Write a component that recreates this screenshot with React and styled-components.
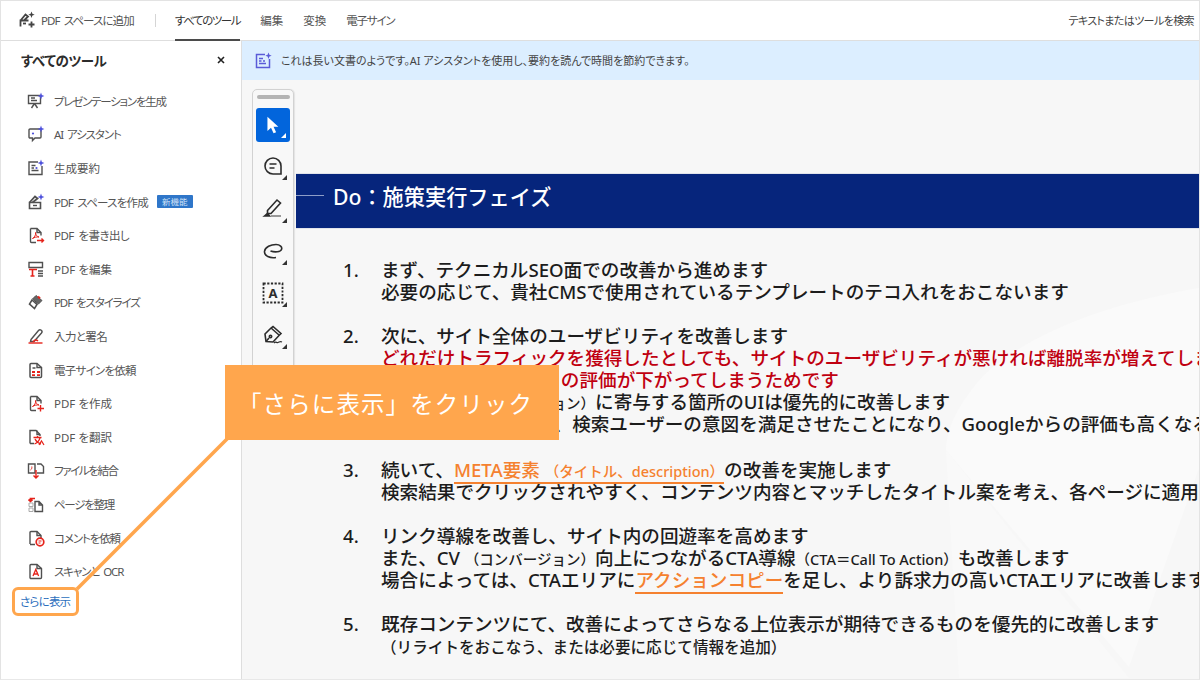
import React from "react";
import styled, { createGlobalStyle, css } from "styled-components";

const GRAY = "#505050";
const RED = "#e5231b";
const PURPLE = "#4f52dc";

const GlobalStyle = createGlobalStyle`
  html, body { margin: 0; padding: 0; background: #fff; }
  body {
    font-family: "Noto Sans", "Noto Sans CJK JP", sans-serif;
    font-feature-settings: "palt";
  }
  * { box-sizing: border-box; }
`;

const Shell = styled.div`
  position: relative;
  width: 1200px;
  height: 680px;
  border: 1px solid #e3e3e3;
  border-bottom-color: #e8e8e8;
  display: flex;
  flex-direction: column;
  overflow: hidden;
`;

const TopBar = styled.header`
  height: 40px;
  flex-shrink: 0;
  display: flex;
  align-items: stretch;
  padding: 0 5px 0 17px;
  border-bottom: 1px solid #dedede;
  background: #fff;
`;

const AddSpace = styled.div`
  display: flex;
  align-items: center;
  gap: 5px;
  padding-bottom: 2px;
  font-size: 11.5px;
  letter-spacing: -0.9px;
  word-spacing: 2px;
  color: #555;
`;

const Divider = styled.span`
  width: 1px;
  height: 13px;
  background: #d5d5d5;
  align-self: center;
  margin: 0 19px 0 21px;
`;

const Tabs = styled.nav`
  display: flex;
  gap: 20px;
`;

const Tab = styled.div`
  display: flex;
  align-items: center;
  padding-bottom: 2px;
  font-size: 11.5px;
  letter-spacing: ${(p) => p.$track || 0}px;
  color: ${(p) => (p.$active ? "#333" : "#555")};
  border-bottom: 2px solid ${(p) => (p.$active ? "#4b4b4b" : "transparent")};
  border-top: 2px solid transparent;
  margin-bottom: -1px;
`;

const Search = styled.div`
  margin-left: auto;
  padding-bottom: 2px;
  display: flex;
  align-items: center;
  font-size: 11px;
  letter-spacing: -0.6px;
  color: #444;
`;

const Body = styled.div`
  flex: 1;
  display: grid;
  grid-template-columns: 241px 1fr;
  min-height: 0;
`;

const Sidebar = styled.aside`
  border-right: 1px solid #dedede;
  background: #fff;
  display: flex;
  flex-direction: column;
`;

const SideHead = styled.div`
  height: 43px;
  padding: 0 16px 5px 20px;
  display: flex;
  align-items: center;
  justify-content: space-between;
  font-size: 13.5px;
  font-weight: 700;
  letter-spacing: -0.4px;
  color: #2c2c2c;
`;

const ToolRow = styled.div`
  height: 33.6px;
  flex-shrink: 0;
  display: flex;
  align-items: center;
  gap: 9px;
  padding-left: 26px;
  font-size: 11.5px;
  color: #555;
  svg { flex-shrink: 0; }
`;

const ToolLabel = styled.span`
  letter-spacing: ${(p) => p.$track || 0}px;
  word-spacing: ${(p) => (p.$track ? 2 : 0)}px;
`;

const NewBadge = styled.span`
  background: #2f76c9;
  color: #cfe2f7;
  font-size: 8.5px;
  line-height: 13px;
  padding: 0 5px;
  border-radius: 1px;
`;

const MoreLink = styled.div`
  padding-left: 19px;
  font-size: 11.5px;
  letter-spacing: -0.8px;
  line-height: 28px;
  color: #2c6fbd;
`;

const Main = styled.main`
  display: flex;
  flex-direction: column;
  min-width: 0;
`;

const Banner = styled.div`
  height: 39px;
  flex-shrink: 0;
  background: #dceeff;
  display: flex;
  align-items: center;
  gap: 9px;
  padding: 0 0 1px 13px;
  font-size: 11px;
  color: #444;
`;

const Viewer = styled.div`
  flex: 1;
  background: #f7f7f7;
  display: flex;
  align-items: flex-start;
  min-height: 0;
`;

const Toolbar = styled.div`
  flex-shrink: 0;
  width: 42px;
  height: 330px;
  margin: 9px 0 0 10px;
  padding: 5px 3px 0;
  border: 1px solid #d2d2d2;
  border-radius: 5px;
  background: #f8f8f8;
  box-shadow: 1px 0 1px rgba(0, 0, 0, 0.08);
  display: flex;
  flex-direction: column;
  align-items: center;
`;

const Grip = styled.div`
  width: 33px;
  height: 4px;
  border-radius: 2px;
  background: #b4b4b4;
  margin-bottom: 9px;
  flex-shrink: 0;
`;

const ToolButton = styled.div`
  position: relative;
  width: 34px;
  height: ${(p) => (p.$active ? "34px" : "42.3px")};
  flex-shrink: 0;
  display: flex;
  align-items: center;
  justify-content: center;
  ${(p) =>
    p.$active &&
    css`
      background: #0265dc;
      border-radius: 3px;
      margin-bottom: 3px;
    `}
  &::after {
    content: "";
    position: absolute;
    right: ${(p) => (p.$active ? "4px" : "3px")};
    bottom: ${(p) => (p.$active ? "4px" : "7px")};
    border-style: solid;
    border-width: 0 0 5px 5px;
    border-color: transparent transparent ${(p) => (p.$active ? "#fff" : "#333")} transparent;
  }
`;

const Slide = styled.section`
  position: relative;
  flex: 1;
  min-width: 0;
  height: 100%;
  margin-left: 2px;
  padding-top: 94px;
  overflow: hidden;
  font-feature-settings: normal;
`;

const Watermark = styled.svg`
  position: absolute;
  right: 0;
  top: 148px;
  width: 300px;
  height: 450px;
`;

const SlideHead = styled.div`
  position: relative;
  height: 54px;
  padding-bottom: 11px;
  background: #06257c;
  display: flex;
  align-items: center;
  gap: 9px;
  color: #fff;
  font-size: 21.2px;
  font-weight: 500;
  box-shadow: 0 0 1px rgba(6, 37, 124, 0.5);
`;

const HeadRule = styled.span`
  width: 28px;
  height: 1px;
  background: #8d9dc8;
`;

const Points = styled.ol`
  position: relative;
  list-style: none;
  margin: 31px 0 0;
  padding: 0 0 0 47px;
  display: flex;
  flex-direction: column;
  gap: 22px;
`;

const Point = styled.li`
  display: grid;
  grid-template-columns: 38px max-content;
  margin-top: ${(p) => p.$shift || 0}px;
  color: #1c1c1c;
  font-size: 18.6px;
  font-weight: 500;
  line-height: 22px;
  white-space: nowrap;
`;

const Lines = styled.div`
  display: flex;
  flex-direction: column;
`;

const Line = styled.div`
  height: 22px;
  color: ${(p) => (p.$red ? "#c00010" : "inherit")};
`;

const Small = styled.span`
  font-size: ${(p) => p.$size || 14.5}px;
`;

const Accent = styled.span`
  color: #f5812f;
  border-bottom: 2px solid #f5812f;
`;

const Callout = styled.div`
  position: absolute;
  left: 224px;
  top: 364px;
  width: 334px;
  height: 75px;
  background: #ffa64d;
  color: #fff;
  display: flex;
  align-items: center;
  padding-left: 13px;
  font-size: 23.5px;
  letter-spacing: 1.1px;
  font-feature-settings: normal;
`;

const Highlight = styled.div`
  position: absolute;
  left: 11px;
  top: 586px;
  width: 67px;
  height: 29px;
  border: 3.5px solid #ffa64d;
  border-radius: 6px;
`;

const Leader = styled.svg`
  position: absolute;
  left: 69px;
  top: 431px;
  width: 165px;
  height: 165px;
`;

const Sparkle = ({ x = 13, y = 4 }) => (
  <path
    d={`M${x} ${y - 3.4}l.9 2.5 2.5.9-2.5.9-.9 2.5-.9-2.5-2.5-.9 2.5-.9z`}
    fill={PURPLE}
    stroke="none"
  />
);

const Doc = () => (
  <path
    d="M3.500 2.500h6.500l4 4v3M3.500 2.500v13a1 1 0 0 0 1 1H9M10 2.500v4h4"
    fill="none"
    stroke={GRAY}
    strokeWidth="1.400"
  />
);

const Swoosh = ({ color = RED }) => (
  <path
    d="M5.500 12.500c2-1 3.500-3.500 3-6 .2 2.500 1.500 4 3.500 4.500-2.500-.2-4.500.2-6.500 1.500z"
    fill="none"
    stroke={color}
    strokeWidth="1"
  />
);

const Glyph = ({ children, size = 18 }) => (
  <svg width={size} height={size} viewBox="0 0 18 18" fill="none" stroke={GRAY} strokeWidth="1.400">
    {children}
  </svg>
);

const toolIcons = {
  present: (
    <Glyph>
      <path d="M1.500 3.500h12v8h-12z" />
      <path d="M4 6h4M4 8.500h6M7.500 11.500l-3 4.500M7.500 11.500l3 4.500" />
      <Sparkle x={14} y={4} />
    </Glyph>
  ),
  chat: (
    <Glyph>
      <path d="M3 4h10a1 1 0 0 1 1 1v7a1 1 0 0 1-1 1H8l-2.500 2.500V13H3a1 1 0 0 1-1-1V5a1 1 0 0 1 1-1z" />
      <circle cx="6" cy="8.500" r="1.100" fill={PURPLE} stroke="none" />
      <Sparkle x={14} y={4} />
    </Glyph>
  ),
  summary: (
    <Glyph>
      <path d="M11 3H2v12.500h13V7" />
      <path d="M4.500 6.500h4M4.500 9h2.500M4.500 11.500h7" />
      <circle cx="9.500" cy="9" r="1.100" fill={PURPLE} stroke="none" />
      <Sparkle x={14} y={4} />
    </Glyph>
  ),
  space: (
    <Glyph>
      <path d="M2.500 15.500v-6h11v6z" strokeWidth="1.600" />
      <path d="M2.500 9.500 8 3.500l2.500 2-5 4" strokeWidth="1.800" />
      <path d="M6 12.500h4" />
      <Sparkle x={14} y={4} />
    </Glyph>
  ),
  exportPdf: (
    <Glyph>
      <Doc />
      <Swoosh />
      <path d="M10 14.500h6.500M14.500 12.500l2 2-2 2" stroke={RED} strokeWidth="1.400" />
    </Glyph>
  ),
  edit: (
    <Glyph>
      <path d="M2 2.500h13.500v5H2z" />
      <path d="M2 9.500h8M5.500 9.500v6.500M3.500 16h4" stroke={RED} strokeWidth="1.600" />
      <path d="M11 11h5M11 13.500h5M11 16h5" />
    </Glyph>
  ),
  stylize: (
    <Glyph>
      <path d="M9 2.500l6 5-3.500 3.500-6-5z" fill="#666" strokeWidth="1" />
      <path d="M11 3.500l2 2" stroke={RED} strokeWidth="2" />
      <path d="M5 7l5 4.500-2.500 4-5-4.500z" strokeWidth="1.600" />
    </Glyph>
  ),
  sign: (
    <Glyph>
      <path d="M4 12.500 11.500 3.500a1.500 1.500 0 0 1 3 2.500L7 14.500H3.500z" />
      <path d="M1.500 16h14" stroke={RED} strokeWidth="1.400" />
      <path d="M6 15c1.500-2.500 3.500-2.500 5-1" stroke={RED} strokeWidth="1.300" />
    </Glyph>
  ),
  esign: (
    <Glyph>
      <path d="M3 3.500a1 1 0 0 1 1-1h6l4.500 4v9a1 1 0 0 1-1 1H4a1 1 0 0 1-1-1z" strokeWidth="1.500" />
      <path d="M10 2.500v4h4.500M5.500 7h3" />
      <path d="M5 10h3v2H5zM10 10h3v2h-3zM5 13.200h3v1.800H5zM10 13.200h3v1.800h-3z" fill={RED} stroke="none" />
    </Glyph>
  ),
  create: (
    <Glyph>
      <Doc />
      <Swoosh />
      <path d="M13.500 11v6.500M10.500 14.500h6.500" stroke={RED} strokeWidth="1.400" />
    </Glyph>
  ),
  translate: (
    <Glyph>
      <path d="M3 15.500v-13h6l4 4v1.500M3 15.500h4" />
      <path d="M10 2.500v4h3" />
      <path d="M6.500 9.500h8M10.500 8v1.500M13 10c-1 3-3 5-5.500 6M8 11c1.500 3 4 4.500 6 5" stroke={RED} strokeWidth="1.300" />
      <path d="M12 17l2.500-4 2.500 4" stroke={RED} strokeWidth="1.200" />
    </Glyph>
  ),
  combine: (
    <Glyph>
      <path d="M1.500 3h6.500v9H1.500zM10 3h4l2.500 2.500V12H10" />
      <path d="M3.500 9c1.200-.8 1.500-2 1.300-3.500" stroke={RED} strokeWidth="1" />
      <path d="M9 9v8M6.500 14.500 9 17l2.500-2.500" stroke={RED} strokeWidth="1.400" />
    </Glyph>
  ),
  organize: (
    <Glyph>
      <path d="M8 6.500h4l3.500 3.500v6.500H8zM12 6.500V10h3.500" strokeWidth="1.400" />
      <path d="M2 8h4v3.500H2zM2 13h4v3.500H2z" stroke="#aaa" strokeWidth="1" />
      <path d="M8 3.500H3.500v2.500M1.500 4.500l2 1.800 2-1.800" stroke={RED} strokeWidth="1.700" />
    </Glyph>
  ),
  comment: (
    <Glyph>
      <path d="M3 15V3.500a1 1 0 0 1 1-1h6l4 4v2.500" strokeWidth="1.400" />
      <path d="M10 2.500v4h4M3 15.500h5" />
      <circle cx="13" cy="13" r="3.800" stroke={RED} strokeWidth="1.700" />
      <path d="M11.500 12h3M11.500 14h2" stroke={RED} strokeWidth="1" />
    </Glyph>
  ),
  ocr: (
    <Glyph>
      <path d="M3 3.500a1 1 0 0 1 1-1h6l4.500 4v9a1 1 0 0 1-1 1H4a1 1 0 0 1-1-1z" strokeWidth="1.400" />
      <path d="M10 2.500v4h4.500" />
      <path d="M6 14l2.800-6.500L11.600 14M7 12h3.600" stroke={RED} strokeWidth="1.300" />
    </Glyph>
  ),
};

const tools = [
  { icon: "present", label: "プレゼンテーションを生成", track: -1.25 },
  { icon: "chat", label: "AI アシスタント", track: -1.1 },
  { icon: "summary", label: "生成要約" },
  { icon: "space", label: "PDF スペースを作成", track: -0.75, isNew: true },
  { icon: "exportPdf", label: "PDF を書き出し", track: -0.5 },
  { icon: "edit", label: "PDF を編集" },
  { icon: "stylize", label: "PDF をスタイライズ", track: -1.1 },
  { icon: "sign", label: "入力と署名", track: -0.6 },
  { icon: "esign", label: "電子サインを依頼", track: -0.75 },
  { icon: "create", label: "PDF を作成" },
  { icon: "translate", label: "PDF を翻訳" },
  { icon: "combine", label: "ファイルを結合", track: -1.4 },
  { icon: "organize", label: "ページを整理", track: -1.3 },
  { icon: "comment", label: "コメントを依頼", track: -1.1 },
  { icon: "ocr", label: "スキャンと OCR", track: -1.1 },
];

const ViewerIcon = ({ children }) => (
  <svg width="22" height="22" viewBox="0 0 22 22" fill="none" stroke="#2c2c2c" strokeWidth="1.600">
    {children}
  </svg>
);

export default function App() {
  return (
    <Shell>
      <GlobalStyle />
      <TopBar>
        <AddSpace>
          <svg width="18" height="18" viewBox="0 0 18 18" fill="none" stroke="#444" strokeWidth="1.800">
            <path d="M2.500 15.500v-6h8M2.500 9.500 7.500 3.500l2.500 2-4 4" />
            <path d="M5 12.500h3" />
            <path d="M13.500 10.500v6M10.500 13.500h6" />
            <path d="M13.500.5l.9 2.300 2.300.9-2.300.9-.9 2.300-.9-2.300-2.300-.9 2.300-.9z" fill="#444" stroke="none" />
          </svg>
          PDF スペースに追加
        </AddSpace>
        <Divider />
        <Tabs>
          <Tab $active $track={-1.4}>すべてのツール</Tab>
          <Tab>編集</Tab>
          <Tab>変換</Tab>
          <Tab $track={-1.2}>電子サイン</Tab>
        </Tabs>
        <Search>テキストまたはツールを検索</Search>
      </TopBar>
      <Body>
        <Sidebar>
          <SideHead>
            すべてのツール
            <svg width="8" height="8" viewBox="0 0 8 8" stroke="#222" strokeWidth="1.600">
              <path d="M1 1l6 6M7 1 1 7" />
            </svg>
          </SideHead>
          {tools.map((tool) => (
            <ToolRow key={tool.label}>
              {toolIcons[tool.icon]}
              <ToolLabel $track={tool.track}>{tool.label}</ToolLabel>
              {tool.isNew && <NewBadge>新機能</NewBadge>}
            </ToolRow>
          ))}
          <MoreLink>さらに表示</MoreLink>
        </Sidebar>
        <Main>
          <Banner>
            <svg width="17" height="17" viewBox="0 0 17 17" fill="none" stroke="#5a5bd8" strokeWidth="1.500">
              <path d="M10 2.500H1.500v13h13V7" />
              <path d="M4 6.500h4M4 9h2.500M4 11.500h7" />
              <circle cx="9" cy="9" r="1" fill="#5a5bd8" stroke="none" />
              <path d="M13.500.5l.9 2.300 2.300.9-2.300.9-.9 2.300-.9-2.300-2.300-.9 2.300-.9z" fill="#5a5bd8" stroke="none" />
            </svg>
            これは長い文書のようです。AI アシスタントを使用し、要約を読んで時間を節約できます。
          </Banner>
          <Viewer>
            <Toolbar>
              <Grip />
              <ToolButton $active>
                <svg width="18" height="20" viewBox="0 0 16 18" fill="#fff">
                  <path d="M3 1.500v13l3.200-3 2.300 5 2.300-1-2.300-5h4.300z" />
                </svg>
              </ToolButton>
              <ToolButton>
                <ViewerIcon>
                  <path d="M19 11a8 8 0 1 0-8 8h8z" />
                  <path d="M7.500 9h7M7.500 13h5" />
                </ViewerIcon>
              </ToolButton>
              <ToolButton>
                <ViewerIcon>
                  <path d="M5.500 13.500 15 3l3.500 3L9 16.500H5.500z" />
                  <path d="M2.500 19l3-2.500 2 2.500z" fill="#2c2c2c" />
                  <path d="M9 19h10" stroke="#999" strokeWidth="2" />
                </ViewerIcon>
              </ToolButton>
              <ToolButton>
                <ViewerIcon>
                  <path d="M14 17.500C8 18.500 2 16 2.500 11.500 3 7 9 4.500 14 4.500c4 0 6.500 2.500 5.500 5-1 2.500-6.500 3-11 1.500" />
                </ViewerIcon>
              </ToolButton>
              <ToolButton>
                <svg width="22" height="22" viewBox="0 0 22 22" fill="none">
                  <rect x="1.500" y="1.500" width="19" height="19" stroke="#2c2c2c" strokeWidth="1.800" strokeDasharray="2.200 1.500" />
                  <text x="11" y="16" textAnchor="middle" fontSize="13" fontWeight="700" fill="#2c2c2c" fontFamily="Noto Sans, sans-serif">A</text>
                </svg>
              </ToolButton>
              <ToolButton>
                <ViewerIcon>
                  <path d="M4 17.500 3 10l6-6 2-1.500 8 7-2 2-6 6.500z" />
                  <path d="M9 4l8 7M7 14l-3 3.500" />
                  <circle cx="8.500" cy="12.500" r="1.200" />
                  <path d="M12 19c2-2 2.500 0 4-.5s2-1.500 4-.5" strokeWidth="1.200" />
                </ViewerIcon>
              </ToolButton>
            </Toolbar>
            <Slide>
              <Watermark viewBox="0 0 300 450" fill="none">
                <path d="M300 60C210 75 130 105 85 147 60 175 47 200 47 222L230 439 300 240z" fill="#fafafa" />
                <path d="M60 450 47 222 230 450z" fill="#f9f9f9" />
              </Watermark>
              <SlideHead>
                <HeadRule />
                Do：施策実行フェイズ
              </SlideHead>
              <Points>
                <Point>
                  <span>1.</span>
                  <Lines>
                    <Line>まず、テクニカルSEO面での改善から進めます</Line>
                    <Line>必要の応じて、貴社CMSで使用されているテンプレートのテコ入れをおこないます</Line>
                  </Lines>
                </Point>
                <Point>
                  <span>2.</span>
                  <Lines>
                    <Line>次に、サイト全体のユーザビリティを改善します</Line>
                    <Line $red>どれだけトラフィックを獲得したとしても、サイトのユーザビリティが悪ければ離脱率が増えてしまい</Line>
                    <Line $red>結果的に Googleからの評価が下がってしまうためです</Line>
                    <Line>
                      また、CV <Small>（コンバージョン）</Small>に寄与する箇所のUIは優先的に改善します
                    </Line>
                    <Line>UI を改善することで、検索ユーザーの意図を満足させたことになり、Googleからの評価も高くなるためです</Line>
                  </Lines>
                </Point>
                <Point $shift={2}>
                  <span>3.</span>
                  <Lines>
                    <Line>
                      続いて、<Accent>META要素 <Small>（タイトル、description）</Small></Accent>の改善を実施します
                    </Line>
                    <Line>検索結果でクリックされやすく、コンテンツ内容とマッチしたタイトル案を考え、各ページに適用していきます</Line>
                  </Lines>
                </Point>
                <Point>
                  <span>4.</span>
                  <Lines>
                    <Line>リンク導線を改善し、サイト内の回遊率を高めます</Line>
                    <Line>
                      また、CV <Small>（コンバージョン）</Small>向上につながるCTA導線<Small>（CTA＝Call To Action）</Small>も改善します
                    </Line>
                    <Line>
                      場合によっては、CTAエリアに<Accent>アクションコピー</Accent>を足し、より訴求力の高いCTAエリアに改善します
                    </Line>
                  </Lines>
                </Point>
                <Point>
                  <span>5.</span>
                  <Lines>
                    <Line>既存コンテンツにて、改善によってさらなる上位表示が期待できるものを優先的に改善します</Line>
                    <Line>
                      <Small $size={15.6}>（リライトをおこなう、または必要に応じて情報を追加）</Small>
                    </Line>
                  </Lines>
                </Point>
              </Points>
            </Slide>
          </Viewer>
        </Main>
      </Body>
      <Callout>「さらに表示」をクリック</Callout>
      <Leader viewBox="0 0 165 165">
        <path d="M158 6 7 157" stroke="#ffa64d" strokeWidth="3.500" />
      </Leader>
      <Highlight />
    </Shell>
  );
}
